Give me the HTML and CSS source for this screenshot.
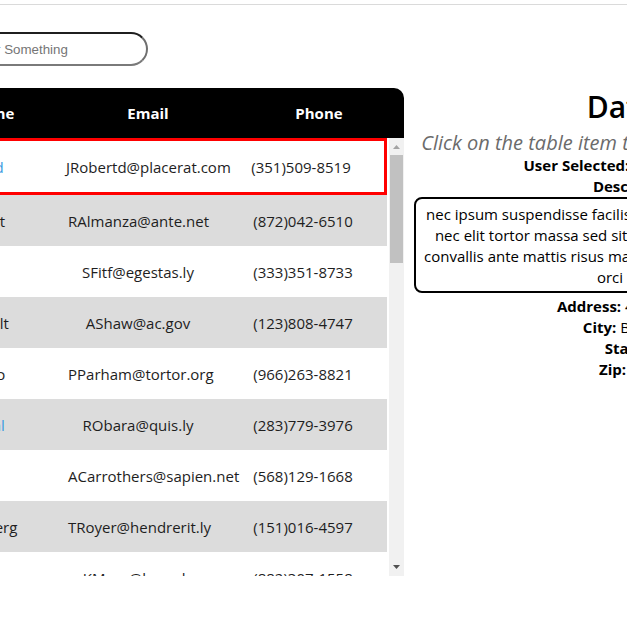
FILE: index.html
```html
<!DOCTYPE html>
<html lang="en">
<head>
<meta charset="utf-8">
<title>Users</title>
<link rel="stylesheet" href="styles.css">
</head>
<body>
<div class="topline"></div>
<main class="page">
  <div class="search-bar">
    <input class="search" type="text" placeholder="Search for Something">
  </div>
  <div class="content">
    <section class="table">
      <div class="thead">
        <div>Name</div>
        <div>Email</div>
        <div class="th-phone">Phone</div>
      </div>
      <div class="tbody-wrap">
        <div class="tbody">
          <div class="row selected"><div class="cell name-link">Jasmine Robertd</div><div class="cell">JRobertd@placerat.com</div><div class="cell">(351)509-8519</div></div>
          <div class="row alt"><div class="cell">Rosalie Almanzat</div><div class="cell">RAlmanza@ante.net</div><div class="cell">(872)042-6510</div></div>
          <div class="row"><div class="cell">Sara Fitf</div><div class="cell">SFitf@egestas.ly</div><div class="cell">(333)351-8733</div></div>
          <div class="row alt"><div class="cell">Anastasia Shawdlt</div><div class="cell">AShaw@ac.gov</div><div class="cell">(123)808-4747</div></div>
          <div class="row"><div class="cell">Pamela Parhamo</div><div class="cell">PParham@tortor.org</div><div class="cell">(966)263-8821</div></div>
          <div class="row alt"><div class="cell name-link">Rebeccah Obaral</div><div class="cell">RObara@quis.ly</div><div class="cell">(283)779-3976</div></div>
          <div class="row"><div class="cell">Ava Carrothers</div><div class="cell">ACarrothers@sapien.net</div><div class="cell">(568)129-1668</div></div>
          <div class="row alt"><div class="cell">Theodore Royerberg</div><div class="cell">TRoyer@hendrerit.ly</div><div class="cell">(151)016-4597</div></div>
          <div class="row"><div class="cell">Kim Moss</div><div class="cell">KMoss@lacus.ly</div><div class="cell">(882)307-1558</div></div>
        </div>
        <div class="scrollbar" aria-hidden="true">
          <svg class="arrow arrow-up" width="7" height="4" viewBox="0 0 7 4"><polygon points="0,4 7,4 3.5,0"/></svg>
          <div class="thumb"></div>
          <svg class="arrow arrow-down" width="7" height="4" viewBox="0 0 7 4"><polygon points="0,0 7,0 3.5,4"/></svg>
        </div>
      </div>
    </section>
    <aside class="details">
      <h2 class="details-title">Data</h2>
      <p class="hint">Click on the table item to view more information.</p>
      <p class="field"><b>User Selected:</b> Jasmine Robertd</p>
      <p class="field"><b>Description</b></p>
      <div class="desc-box">nec ipsum suspendisse facilisis vulputate mi aliquam<br>nec elit tortor massa sed sit amet dictum etiam mi<br>convallis ante mattis risus magna sit amet venenatis et<br>orci</div>
      <p class="field first-after"><b>Address:</b> 4521 Pine St.</p>
      <p class="field"><b>City:</b> Bridgeton</p>
      <p class="field"><b>State:</b> NJ</p>
      <p class="field"><b>Zip:</b> 08302</p>
    </aside>
  </div>
</main>
</body>
</html>
```
FILE: styles.css
```css
* { box-sizing: border-box; }

html, body {
  margin: 0;
  overflow: hidden;
  background: #fff;
}

body {
  font-family: "Open Sans", "Liberation Sans", sans-serif;
  color: #000;
}

.topline {
  height: 5px;
  border-bottom: 1px solid #dadada;
}

.page {
  margin-left: -150px;
  width: 1008px;
}

.search-bar {
  padding-top: 27px;
  padding-left: 75px;
}

.search {
  display: block;
  width: 223px;
  height: 34px;
  border: 2px solid;
  border-color: #1f1f1f #6f6f6f #7a7a7a #1f1f1f;
  border-radius: 17px;
  padding: 0 12px;
  font: 13.33px "Liberation Sans", Arial, sans-serif;
  color: #000;
  outline: none;
  background: #fff;
}

.search::placeholder { color: #757575; }

.content {
  display: flex;
  gap: 10px;
  margin-top: 22px;
  align-items: flex-start;
}

.table {
  width: 554px;
  flex: none;
}

.thead {
  height: 50px;
  background: #000;
  color: #fff;
  border-radius: 10px 10px 0 0;
  display: grid;
  grid-template-columns: 164px 148px 1fr;
  padding-left: 60px;
  align-items: center;
  font-weight: 700;
  font-size: 15px;
  text-align: center;
}

.th-phone { padding-left: 12px; }

.tbody-wrap {
  display: flex;
  gap: 2px;
  height: 438px;
}

.tbody {
  width: 537px;
  overflow: hidden;
}

.row {
  display: grid;
  grid-template-columns: 191px 140px 136px;
  column-gap: 27px;
  height: 51px;
  align-items: center;
  font-size: 15px;
  color: #1e1e1e;
  white-space: nowrap;
}

.row.alt { background: #dcdcdc; }

.row.selected {
  height: 57px;
  border: 3px solid #ff0000;
  grid-template-columns: 186px 140px 136px;
}

.cell { text-align: center; }

.name-link { color: #3b9ae1; }

.scrollbar {
  width: 15px;
  flex: none;
  background: #f1f1f1;
  display: flex;
  flex-direction: column;
  align-items: center;
}

.arrow { display: block; }
.arrow-up { margin-top: 7px; fill: #a3a3a3; }
.arrow-down { margin-top: auto; margin-bottom: 7px; fill: #505050; }

.thumb {
  width: 13px;
  height: 108px;
  margin-top: 6px;
  background: #c1c1c1;
}

.details {
  width: 444px;
  flex: none;
  text-align: center;
}

.details-title {
  margin: 1px 0 0;
  padding-right: 30px;
  font-size: 30px;
  font-weight: 600;
  line-height: 36px;
}

.hint {
  margin: 6px 0 0;
  font-style: italic;
  font-size: 20px;
  line-height: 24px;
  color: #6b6b6b;
  white-space: nowrap;
}

.field {
  margin: 0;
  font-size: 15px;
  line-height: 21px;
  white-space: nowrap;
}

.field b { font-weight: 700; }

.desc-box {
  width: 392px;
  border: 2px solid #000;
  border-radius: 8px;
  padding: 5px 8px 3px;
  font-size: 15px;
  line-height: 21px;
  white-space: nowrap;
}

.first-after { margin-top: 3px; }
```
